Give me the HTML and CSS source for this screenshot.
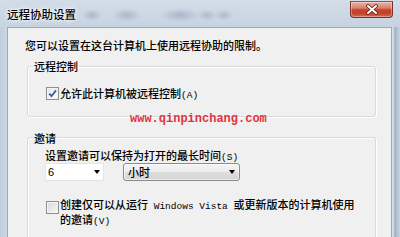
FILE: index.html
```html
<!DOCTYPE html>
<html lang="zh-CN">
<head>
<meta charset="utf-8">
<title>远程协助设置</title>
<link rel="stylesheet" href="styles.css">
</head>
<body>
<div class="window">
  <div class="titlebar">
    <span class="title">远程协助设置</span>
    <div class="close">
      <svg width="14" height="11" viewBox="0 0 14 11">
        <path d="M3 2 L11 9 M11 2 L3 9" stroke="#5a2019" stroke-width="3.6" stroke-linecap="round"/>
        <path d="M3 2 L11 9 M11 2 L3 9" stroke="#ffffff" stroke-width="2" stroke-linecap="round"/>
      </svg>
    </div>
  </div>
  <div class="body">
    <div class="frame-l"></div>
    <div class="client">
      <p class="intro">您可以设置在这台计算机上使用远程协助的限制。</p>
      <fieldset class="group group-control">
        <legend>远程控制</legend>
        <div class="group-body">
          <label class="check">
            <span class="box checked">
              <svg width="11" height="11" viewBox="0 0 11 11"><path d="M2.2 5.6 L4.5 8.2 L9 2.4" fill="none" stroke="#3a5d9f" stroke-width="1.8"/></svg>
            </span>
            <span class="txt">允许此计算机被远程控制<span class="lat">(A)</span></span>
          </label>
        </div>
      </fieldset>
      <div class="watermark">www.qinpinchang.com</div>
      <fieldset class="group group-invite">
        <legend>邀请</legend>
        <div class="group-body">
          <div class="line">设置邀请可以保持为打开的最长时间<span class="lat">(S)</span></div>
          <div class="combos">
            <div class="combo edit"><span class="val">6</span><i class="arrow"></i></div>
            <div class="combo list"><span class="val">小时</span><i class="arrow"></i></div>
          </div>
          <label class="check two">
            <span class="box"></span>
            <span class="txt">创建仅可以从运行<span class="lat"> Windows Vista </span>或更新版本的计算机使用<br>的邀请<span class="lat">(V)</span></span>
          </label>
        </div>
      </fieldset>
    </div>
    <div class="frame-r"></div>
  </div>
</div>
</body>
</html>
```

FILE: styles.css
```css
html, body {
  margin: 0;
  padding: 0;
}
body {
  width: 400px;
  height: 237px;
  overflow: hidden;
  font-family: "Noto Sans CJK SC", "Noto Sans", sans-serif;
  font-size: 11px;
  font-weight: 500;
  color: #000;
}
.window {
  width: 400px;
  height: 237px;
  display: flex;
  flex-direction: column;
  background: #c5d2e0;
}
.titlebar {
  height: 27px;
  display: flex;
  justify-content: space-between;
  align-items: flex-start;
  background:
    radial-gradient(ellipse 10px 6px at 92px 15px, rgba(130,146,168,0.45), rgba(130,146,168,0)),
    radial-gradient(ellipse 14px 7px at 127px 15px, rgba(130,146,168,0.45), rgba(130,146,168,0)),
    radial-gradient(ellipse 20px 7px at 180px 15px, rgba(130,146,168,0.45), rgba(130,146,168,0)),
    radial-gradient(ellipse 10px 6px at 207px 15px, rgba(130,146,168,0.4), rgba(130,146,168,0)),
    radial-gradient(ellipse 10px 6px at 224px 15px, rgba(130,146,168,0.4), rgba(130,146,168,0)),
    linear-gradient(#d3dde8, #c6d3e1);
}
.title {
  padding: 1px 0 0 7px;
  line-height: 26px;
  font-size: 11.5px;
  color: #000;
  text-shadow: 0 0 5px #fff, 0 0 3px #fff;
}
.close {
  margin: 1px 7px 0 0;
  width: 43px;
  height: 17px;
  box-sizing: border-box;
  border: 1px solid #7a3026;
  border-top-color: #9a5048;
  border-radius: 0 0 4px 4px;
  background: linear-gradient(#eab2a6 0%, #d8826f 40%, #c3442f 52%, #c4412b 75%, #d8684c 100%);
  box-shadow: inset 0 0 0 1px rgba(255,255,255,0.35);
  display: flex;
  align-items: center;
  justify-content: center;
}
.body {
  flex: 1;
  display: flex;
  min-height: 0;
}
.frame-l {
  width: 7px;
  background: linear-gradient(90deg, #c0cedd, #cad6e3);
}
.frame-r {
  width: 8px;
  background:
    linear-gradient(90deg, rgba(255,255,255,0.3) 0, rgba(255,255,255,0) 30%),
    linear-gradient(90deg, #c8d4e2 0, #c8d4e2 15%, #9eb1c7 40%, #b2c2d4 60%, #c6d2e0 100%);
}
.client {
  flex: 1;
  position: relative;
  background: #f0f0f0;
  border: 1px solid #9aaabd;
  border-bottom: none;
  padding: 10px 15px 0 17px;
  overflow: hidden;
}
.intro {
  margin: 0;
  line-height: 14px;
}
.group {
  margin: 7px 0 0 2px;
  border: 1px solid #d3dbe0;
  border-radius: 3px;
  padding: 13px 0 15px 5px;
  box-shadow: inset 1px 1px 0 #fff, 1px 1px 0 #fff;
  min-width: 0;
}
.group legend {
  padding: 0 1px;
  line-height: 14px;
}
.group-invite {
  margin-top: 14px;
  padding-top: 3px;
}
.group-body {
  padding-left: 12px;
}
.check {
  display: flex;
  align-items: center;
  gap: 1px;
  line-height: 14px;
}
.box {
  margin-left: 1px;
  width: 13px;
  height: 13px;
  box-sizing: border-box;
  border: 1px solid #8e8f8f;
  background: linear-gradient(135deg, #d9d9d9, #f7f7f7);
  box-shadow: inset 0 0 0 1px #f4f4f4;
  display: flex;
  align-items: center;
  justify-content: center;
  flex: none;
}
.box.checked {
  background: linear-gradient(135deg, #e4e4e4, #ffffff);
}
.lat {
  font-family: "Liberation Mono", monospace;
  font-size: 9.5px;
  font-weight: normal;
  line-height: 1;
}
.line {
  line-height: 14px;
}
.combos {
  display: flex;
  gap: 19px;
  margin-top: 1px;
}
.combo {
  height: 18px;
  box-sizing: border-box;
  display: flex;
  align-items: center;
  justify-content: space-between;
}
.edit {
  width: 59px;
  background: #fff;
  border: 1px solid #e4e4e4;
  padding: 0 3px 0 2px;
  font-family: "Liberation Sans", sans-serif;
  font-weight: normal;
}
.list {
  width: 117px;
  border: 1px solid #8a8a8a;
  border-radius: 3px;
  background: linear-gradient(#f4f4f4 0%, #ececec 50%, #dedede 52%, #d4d4d4 100%);
  box-shadow: inset 0 0 0 1px rgba(255,255,255,0.6);
  padding: 0 4px 0 4px;
}
.arrow {
  width: 0;
  height: 0;
  border-left: 3.5px solid transparent;
  border-right: 3.5px solid transparent;
  border-top: 4px solid #000;
}
.check.two {
  margin-top: 16px;
  align-items: flex-start;
  line-height: 14px;
}
.check.two .box {
  margin-top: 4px;
}
.watermark {
  position: absolute;
  left: 122px;
  top: 84px;
  font-family: "Liberation Mono", monospace;
  font-size: 12px;
  font-weight: bold;
  line-height: 14px;
  color: #e5323c;
}
```
